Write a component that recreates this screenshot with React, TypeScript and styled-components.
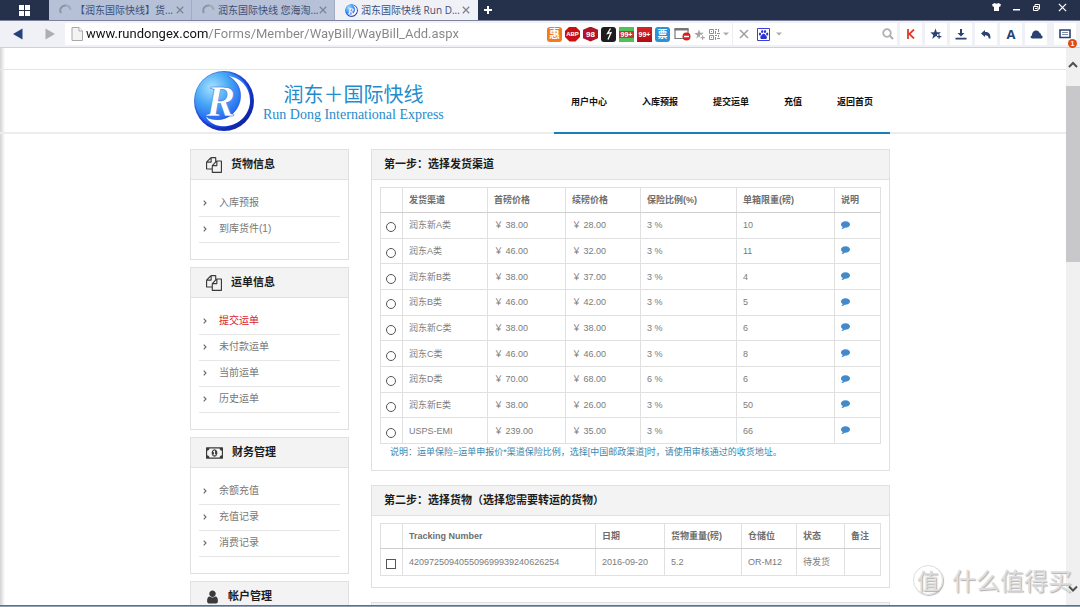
import React, { useState } from "react";
import styled, { createGlobalStyle } from "styled-components";

const latin = `"Liberation Sans", "Noto Sans CJK SC", sans-serif`;
const chrome = `"Open Sans", "Noto Sans CJK SC", sans-serif`;
const cjk = `"Noto Sans CJK SC", sans-serif`;
const line = "#e0e0e0";
const navy = "#2b4270";

const GlobalStyle = createGlobalStyle`
  * { box-sizing: border-box; }
  html, body { margin: 0; }
  body { font-family: ${latin}; background: #fff; }
  button { border: 0; padding: 0; background: none; font: inherit; color: inherit; cursor: pointer; }
  a { color: inherit; text-decoration: none; }
  svg { display: block; flex: none; }
  ul { list-style: none; margin: 0; padding: 0; }
`;

/* ---------- browser frame ---------- */

const Window = styled.div`
  height: 100vh;
  display: grid;
  grid-template-rows: 21px 27px minmax(0, 1fr) 2px;
  overflow: hidden;
`;

const TabBar = styled.div`
  display: flex;
  background: #25304b;
  border-bottom: 1px solid #7c829b;
  font-family: ${chrome};
`;

const StartButton = styled.button`
  width: 49px;
  display: flex;
  align-items: center;
  justify-content: center;
`;

const Tab = styled.div<{ $active?: boolean }>`
  width: 143px;
  display: flex;
  align-items: center;
  gap: 3px;
  padding: 0 7px 0 10px;
  color: #3b4f78;
  font-size: 10px;
  line-height: 20px;
  background: ${(p) => (p.$active ? "#f0f1f7" : "#b6c0d6")};
  border-right: 1px solid ${(p) => (p.$active ? "#f0f1f7" : "#a3abc0")};
`;

const TabTitle = styled.span`
  flex: 1;
  min-width: 0;
  white-space: nowrap;
`;

const NewTab = styled.button`
  width: 20px;
  display: flex;
  align-items: center;
  justify-content: center;
`;

const WindowButtons = styled.div`
  margin-left: auto;
  display: flex;
  align-items: flex-start;
  gap: 11px;
  padding: 2px 13px 0 0;
`;

const WindowButton = styled.button<{ $last?: boolean }>`
  width: 9px;
  height: 10px;
  display: flex;
  align-items: center;
  justify-content: center;
  margin-left: ${(p) => (p.$last ? "6px" : "0")};
`;

const Toolbar = styled.div`
  display: flex;
  align-items: center;
  background: #f0f1f6;
  border-bottom: 1px solid #cfd0d8;
  padding: 0 4px 0 0;
`;

const HistoryButtons = styled.div`
  width: 65px;
  display: flex;
  gap: 22px;
  padding-left: 13px;
`;

const AddressBar = styled.div`
  flex: 1;
  height: 22px;
  display: flex;
  align-items: center;
  background: #fff;
  padding: 0 3px 0 6px;
`;

const AddressInput = styled.input`
  flex: 1;
  min-width: 0;
  height: 22px;
  border: 0;
  outline: 0;
  padding: 0;
  margin-left: 3px;
  font: 13px/22px Roboto, "Noto Sans CJK SC", sans-serif;
  color: transparent;
  background: linear-gradient(to right, #111 122px, #858585 122px);
  background-clip: text;
  -webkit-background-clip: text;
`;

const Extensions = styled.div`
  display: flex;
  align-items: center;
  gap: 3px;
  margin-right: 100px;
`;

const Badge = styled.button<{ $bg: string; $radius?: string; $clip?: string; $size?: string }>`
  width: 15px;
  height: 15px;
  border-radius: ${(p) => p.$radius ?? "3px"};
  clip-path: ${(p) => p.$clip ?? "none"};
  background: ${(p) => p.$bg};
  color: #fff;
  font: bold ${(p) => p.$size ?? "10px"} / 15px ${latin};
  display: flex;
  align-items: center;
  justify-content: center;
`;

const PlainTool = styled.button<{ $w: string }>`
  width: ${(p) => p.$w};
  height: 15px;
  display: flex;
  align-items: center;
  justify-content: center;
`;

const Divider = styled.span`
  width: 1px;
  height: 22px;
  background: #ececf0;
`;

const ToolButtons = styled.div`
  display: flex;
  gap: 3px;
  padding-left: 3px;
`;

const ToolButton = styled.button`
  position: relative;
  width: 22px;
  height: 22px;
  background: #fff;
  color: ${navy};
  display: flex;
  align-items: center;
  justify-content: center;
  font: bold 13px/22px ${chrome};

  &:last-child { margin-left: 4px; }
`;

const Notice = styled.span`
  position: absolute;
  right: -1px;
  bottom: -3px;
  width: 9px;
  height: 9px;
  border-radius: 50%;
  background: #e04a10;
  color: #fff;
  font: bold 7px/9px ${latin};
  text-align: center;
`;

const Viewport = styled.div`
  position: relative;
  overflow: hidden;
  background: linear-gradient(to right, #d3d3d6, #fff 5px);
`;

const ScrollBar = styled.div`
  position: absolute;
  top: 0;
  right: 0;
  bottom: 0;
  width: 14px;
  display: flex;
  flex-direction: column;
  align-items: center;
  background: #f0f0f0;
  padding: 13px 0 12px;
`;

const ScrollThumb = styled.div`
  width: 14px;
  height: 176px;
  margin: 17px 0 auto;
  background: #c8c8cb;
`;

const Taskbar = styled.div`
  background: #8c9fb6;
  border-top: 1px solid #62707f;
`;

const Watermark = styled.div`
  position: absolute;
  right: 8px;
  bottom: 8px;
  display: flex;
  align-items: center;
  gap: 9px;
  font: 24px/34px ${cjk};
  color: #dedede;
  text-shadow: 1px 1px 1px #b0b0b0;
  white-space: nowrap;
`;

const WatermarkSeal = styled.span`
  width: 30px;
  height: 30px;
  border-radius: 50%;
  border: 1px solid #dedede;
  box-shadow: 1px 1px 1px #b8b8b8;
  font-size: 22px;
  line-height: 26px;
  text-align: center;
`;

/* ---------- site ---------- */

const TopStrip = styled.div`
  height: 22px;
  border-bottom: 1px solid #e6e6e6;
`;

const Header = styled.header`
  height: 64px;
  border-bottom: 2px solid #ececec;
`;

const Container = styled.div`
  max-width: 700px;
  margin: 0 auto;
  display: flex;
  align-items: flex-start;
  justify-content: space-between;
`;

const Brand = styled.a`
  display: flex;
  align-items: center;
  height: 62px;
  padding-left: 3px;
  gap: 8px;
`;

const BrandText = styled.span`
  display: flex;
  flex-direction: column;
  align-items: center;
  color: #1f8ccb;
  padding-top: 4px;
`;

const BrandName = styled.span`
  font: 20px/24px ${cjk};
`;

const BrandLatin = styled.span`
  font: 14px/18px "Liberation Serif", serif;
`;

const Nav = styled.nav`
  display: flex;
  gap: 35px;
  height: 64px;
  padding: 0 17px;
  border-bottom: 2px solid #1a7fb5;
  color: #111;
  font: bold 9px/64px ${cjk};
`;

const Columns = styled(Container)`
  padding-top: 15px;
  gap: 22px;
`;

const Sidebar = styled.aside`
  width: 159px;
  flex: none;
  display: flex;
  flex-direction: column;
  gap: 7px;
`;

const Main = styled.main`
  flex: 1;
  min-width: 0;
  display: flex;
  flex-direction: column;
  gap: 14px;
`;

const Panel = styled.section`
  border: 1px solid #e0e0e0;
  background: #fff;
`;

const PanelTitle = styled.h2`
  margin: 0;
  height: 30px;
  display: flex;
  align-items: center;
  gap: 9px;
  background: #f3f3f3;
  border-bottom: 1px solid #e0e0e0;
  color: #1c1c1c;
  font: bold 11px/29px ${latin};

  svg { color: #3a3a3a; }
`;

const MenuTitle = styled(PanelTitle)`
  padding-left: 15px;
`;

const StepTitle = styled(PanelTitle)`
  padding-left: 12px;
`;

const Menu = styled.ul`
  padding: 11px 8px 16px;
`;

const MenuItem = styled.li<{ $active?: boolean }>`
  height: 26px;
  border-bottom: 1px solid #e6e6e6;
  color: ${(p) => (p.$active ? "#d9252b" : "#777")};
  font-size: 10px;
  line-height: 24px;

  a {
    display: flex;
    align-items: center;
    gap: 12px;
    padding-left: 4px;
  }
`;

const StepBody = styled.div<{ $bottom: string }>`
  padding: 7px 8px ${(p) => p.$bottom};
`;

const DataTable = styled.table<{ $height: string }>`
  width: 100%;
  height: ${(p) => p.$height};
  table-layout: fixed;
  border-collapse: collapse;
  color: #7b7b7b;
  font-size: 9px;
  line-height: 14px;

  th, td {
    border: 1px solid ${line};
    height: 25px;
    padding: 0 6px;
    text-align: left;
    white-space: nowrap;
  }
  th {
    border-bottom-color: #cfcfcf;
    color: #6e6e6e;
  }
  th:first-child, td:first-child {
    padding: 0 5px;
  }
`;

const Pick = styled.input`
  appearance: none;
  display: block;
  width: 10px;
  height: 10px;
  margin: 4px 0 0;
  border: 1px solid #555;
  background: #fff;

  &[type="radio"] { border-radius: 50%; }
  &:checked { box-shadow: inset 0 0 0 2px #fff; background: #444; }
`;

const NoteLink = styled.a`
  display: block;
  width: 10px;
  padding-bottom: 2px;
  color: #428bca;
`;

const Note = styled.p`
  margin: 0;
  padding-left: 10px;
  color: #3a87ad;
  font-size: 9px;
  line-height: 16px;
`;

/* ---------- icons ---------- */

type IconProps = { w: number; h?: number; box?: string; d: string };
const Glyph = ({ w, h = w, box = "0 0 1792 1792", d }: IconProps) => (
  <svg width={w} height={h} viewBox={box} fill="currentColor" aria-hidden="true">
    <path d={d} />
  </svg>
);

const FILES =
  "M1696 384q40 0 68 28t28 68v1216q0 40-28 68t-68 28h-960q-40 0-68-28t-28-68v-288h-544q-40 0-68-28t-28-68v-672q0-40 20-88t48-76l408-408q28-28 76-48t88-20h416q40 0 68 28t28 68v328q68-40 128-40h416zm-544 213l-299 299h299v-299zm-640-384l-299 299h299v-299zm196 647l316-316v-416h-384v416q0 40-28 68t-68 28h-416v640h512v-256q0-40 20-88t48-76zm956 804v-1152h-384v416q0 40-28 68t-68 28h-416v640h896z";
const MONEY =
  "M768 1152h384v-96h-128v-448h-114l-148 137 77 80q42-37 55-57h2v288h-128v96zm512-256q0 70-21 142t-59.5 134-101.5 101-138 39-138-39-101.5-101-59.5-134-21-142 21-142 59.5-134 101.5-101 138-39 138 39 101.5 101 59.5 134 21 142zm512 256v-512q-106 0-181-75t-75-181h-1152q0 106-75 181t-181 75v512q106 0 181 75t75 181h1152q0-106 75-181t181-75zm128-832v1152q0 26-19 45t-45 19h-1792q-26 0-45-19t-19-45v-1152q0-26 19-45t45-19h1792q26 0 45 19t19 45z";
const USER =
  "M1536 1399q0 109-62.5 187t-150.5 78h-854q-88 0-150.5-78t-62.5-187q0-85 8.5-160.5t31.5-152 58.5-131 94-89 134.5-34.5q131 128 313 128t313-128q76 0 134.5 34.5t94 89 58.5 131 31.5 152 8.5 160.5zm-256-887q0 159-112.5 271.5t-271.5 112.5-271.5-112.5-112.5-271.5 112.5-271.5 271.5-112.5 271.5 112.5 112.5 271.5z";
const COMMENT =
  "M1792 896q0 174-120 321.5t-326 233-450 85.5q-70 0-145-8-198 175-460 242-49 14-114 22-17 2-30.5-9t-17.5-29v-1q-3-4-.5-12t2-10 4.5-9.5l6-9 7-8.5 8-9q7-8 31-34.5t34.5-38 31-39.5 32.5-51 27-59 26-76q-157-89-247.5-220t-90.5-281q0-130 71-248.5t191-204.5 286-136.5 348-50.5 348 50.5 286 136.5 191 204.5 71 248.5z";

const Cross = ({ size, color, width = 1.6 }: { size: number; color: string; width?: number }) => (
  <svg width={size} height={size} viewBox="0 0 10 10" stroke={color} strokeWidth={width} aria-hidden="true">
    <path d="M1 1l8 8M9 1l-8 8" />
  </svg>
);

const Spinner = () => (
  <svg width="13" height="13" viewBox="0 0 13 13" fill="none" strokeWidth="2" aria-hidden="true">
    <path d="M2 9A5 5 0 0 1 7 1.5" stroke="#8d94a6" />
    <path d="M7 1.5A5 5 0 0 1 11.5 6" stroke="#9fa7ba" />
  </svg>
);

const Arrow = ({ color, flip }: { color: string; flip?: boolean }) => (
  <svg width="10" height="12" viewBox="0 0 10 12" fill={color} aria-hidden="true">
    <path d={flip ? "M.5 .5v11L10 6z" : "M9.5 .5v11L0 6z"} />
  </svg>
);

const Caret = () => (
  <svg width="6" height="4" viewBox="0 0 6 4" fill="#aaa" aria-hidden="true">
    <path d="M0 .5h6L3 3.5z" />
  </svg>
);

const ScrollArrow = ({ down }: { down?: boolean }) => (
  <svg width="10" height="8" viewBox="0 0 10 8" fill="none" stroke="#505050" strokeWidth="2" aria-hidden="true">
    <path d={down ? "M1 1.5l4 4 4-4" : "M1 6l4-4 4 4"} />
  </svg>
);

const Chevron = () => (
  <svg width="4" height="6" viewBox="0 0 4 6" fill="none" stroke="#666" strokeWidth="1.1" aria-hidden="true">
    <path d="M.7 .6L3 3 .7 5.4" />
  </svg>
);

const Logo = ({ size, id }: { size: number; id: string }) => (
  <svg width={size} height={size} viewBox="0 0 62 62" aria-hidden="true">
    <defs>
      <radialGradient id={id} cx="0.3" cy="0.28" r="0.8">
        <stop offset="0" stopColor="#a6e2ff" />
        <stop offset="0.4" stopColor="#46a6f5" />
        <stop offset="0.8" stopColor="#1f5cf0" />
        <stop offset="1" stopColor="#0a22b4" />
      </radialGradient>
      <linearGradient id={`${id}-rim`} x1="0" y1="0" x2="1" y2="1">
        <stop offset="0" stopColor="#5aa8e8" />
        <stop offset="0.5" stopColor="#1c3fd0" />
        <stop offset="1" stopColor="#0a1a90" />
      </linearGradient>
    </defs>
    <circle cx="31" cy="31" r="30" fill={`url(#${id}-rim)`} />
    <circle cx="30" cy="30" r="28" fill={`url(#${id})`} />
    <path d="M35 6C50 8 58 20 57 33C55 48 42 58 27 56C21 55 16 52 13 47C28 54 43 47 47 31C49 20 45 11 35 6z" fill="#fff" />
    <path d="M35 6C46 12 49 22 47 31C43 46 29 53 15 48" fill="none" stroke="#1d50d8" strokeWidth="1" opacity="0.6" />
    <text
      x="13"
      y="46"
      fontFamily="Liberation Serif, serif"
      fontStyle="italic"
      fontWeight="bold"
      fontSize="44"
      fill="#fff"
      stroke="#2a62d8"
      strokeWidth="0.5"
    >
      R
    </text>
  </svg>
);

/* ---------- data ---------- */

const sections = [
  { title: "货物信息", icon: <Glyph w={16} d={FILES} />, items: ["入库预报", "到库货件(1)"] },
  { title: "运单信息", icon: <Glyph w={16} d={FILES} />, items: ["提交运单", "未付款运单", "当前运单", "历史运单"] },
  { title: "财务管理", icon: <Glyph w={17} h={16} box="0 0 1920 1792" d={MONEY} />, items: ["余额充值", "充值记录", "消费记录"] },
  { title: "帐户管理", icon: <Glyph w={13} h={16} box="128 0 1536 1792" d={USER} />, items: [] },
];

const channels = [
  ["润东新A类", "38.00", "28.00", "3 %", "10"],
  ["润东A类", "46.00", "32.00", "3 %", "11"],
  ["润东新B类", "38.00", "37.00", "3 %", "4"],
  ["润东B类", "46.00", "42.00", "3 %", "5"],
  ["润东新C类", "38.00", "38.00", "3 %", "6"],
  ["润东C类", "46.00", "46.00", "3 %", "8"],
  ["润东D类", "70.00", "68.00", "6 %", "6"],
  ["润东新E类", "38.00", "26.00", "3 %", "50"],
  ["USPS-EMI", "239.00", "35.00", "3 %", "66"],
];

const Cols = ({ widths }: { widths: number[] }) => (
  <colgroup>
    {widths.map((w, i) => (
      <col key={i} width={w} />
    ))}
    <col />
  </colgroup>
);

const BrowserTabs = () => (
  <TabBar>
    <StartButton aria-label="菜单">
      <svg width="11" height="11" viewBox="0 0 11 11" fill="#fff">
        <path d="M0 0h5v5H0zM6 0h5v5H6zM0 6h5v5H0zM6 6h5v5H6z" />
      </svg>
    </StartButton>
    <Tab>
      <Spinner />
      <TabTitle>【润东国际快线】货...</TabTitle>
      <button aria-label="关闭标签">
        <Cross size={8} color="#7d8390" />
      </button>
    </Tab>
    <Tab>
      <Spinner />
      <TabTitle>润东国际快线 您海淘...</TabTitle>
      <button aria-label="关闭标签">
        <Cross size={8} color="#7d8390" />
      </button>
    </Tab>
    <Tab $active>
      <Logo size={13} id="favicon" />
      <TabTitle>润东国际快线 Run D...</TabTitle>
      <button aria-label="关闭标签">
        <Cross size={8} color="#7d8390" />
      </button>
    </Tab>
    <NewTab aria-label="新标签">
      <svg width="8" height="8" viewBox="0 0 8 8" fill="#fff">
        <path d="M3 0h2v3h3v2H5v3H3V5H0V3h3z" />
      </svg>
    </NewTab>
    <WindowButtons>
      <WindowButton aria-label="皮肤">
        <svg width="9" height="8" viewBox="0 0 9 8" fill="#fff">
          <path d="M0 1.500L2.500 0Q4.500 1.600 6.500 0L9 1.500 8 4 7 3.500V8H2V3.500L1 4z" />
        </svg>
      </WindowButton>
      <WindowButton aria-label="最小化">
        <svg width="7" height="8" viewBox="0 0 7 8" fill="#fff">
          <path d="M0 6h7v1.500H0z" />
        </svg>
      </WindowButton>
      <WindowButton aria-label="还原">
        <svg width="7" height="7" viewBox="0 0 7 7" fill="none" stroke="#fff">
          <path d="M2 2V.5h4.500v4.500H5M.5 2.500H5v4H.5z" />
          <path d="M2 4.500h2" />
        </svg>
      </WindowButton>
      <WindowButton $last aria-label="关闭">
        <Cross size={9} color="#fff" width={1.4} />
      </WindowButton>
    </WindowButtons>
  </TabBar>
);

const BrowserToolbar = () => {
  const [url, setUrl] = useState("www.rundongex.com/Forms/Member/WayBill/WayBill_Add.aspx");
  return (
    <Toolbar>
      <HistoryButtons>
        <button aria-label="后退">
          <Arrow color="#26427a" />
        </button>
        <button aria-label="前进">
          <Arrow color="#acaeb4" flip />
        </button>
      </HistoryButtons>
      <AddressBar>
        <svg width="12" height="14" viewBox="0 0 12 14" fill="#f3f3f3" stroke="#a9a9a9">
          <path d="M1 .5h7L11.500 4v9.500H1z" />
          <path d="M8 .5V4h3.500" fill="#fff" />
        </svg>
        <AddressInput aria-label="地址" value={url} onChange={(e) => setUrl(e.target.value)} />
        <Extensions>
          <Badge $bg="#f47a20" $size="11px">惠</Badge>
          <Badge
            $bg="#c90f12"
            $size="6px"
            $clip="polygon(30% 0, 70% 0, 100% 30%, 100% 70%, 70% 100%, 30% 100%, 0 70%, 0 30%)"
          >
            ABP
          </Badge>
          <Badge $bg="#b3122a" $clip="polygon(50% 0, 100% 22%, 100% 78%, 50% 100%, 0 78%, 0 22%)" $size="8px">
            98
          </Badge>
          <Badge $bg="#1d1d1f" aria-label="加速">
            <svg width="8" height="12" viewBox="0 0 8 12" fill="none" stroke="#fff" strokeWidth="1.3">
              <path d="M5.500 .5L2.500 5.500l3.500-.8L3 11.500" />
            </svg>
          </Badge>
          <Badge $bg="linear-gradient(#4fc35a 4px, #c9342e 4px 11px, #4fc35a 11px)" $radius="0" $size="7px">
            99+
          </Badge>
          <Badge $bg="linear-gradient(#d8252a, #b00d12)" $radius="0" $size="7px">
            99+
          </Badge>
          <Badge $bg="#2a94d6" $size="10px">票</Badge>
          <PlainTool $w="18px" aria-label="拦截">
            <svg width="17" height="14" viewBox="0 0 17 14">
              <path d="M1 2.500h13v9H1z" fill="#fff" stroke="#777" strokeWidth="1.2" />
              <path d="M.4 1h14.200v2.500H.4z" fill="#777" />
              <circle cx="12.500" cy="9.500" r="4" fill="#e01b1b" />
              <path d="M10 9.500h5" stroke="#fff" strokeWidth="1.5" />
            </svg>
          </PlainTool>
          <PlainTool $w="11px" aria-label="收藏">
            <svg width="11" height="11" viewBox="0 0 11 11" fill="#a6a6a6">
              <path d="M5 .5l1.300 3.200 3.400.1-2 2H6v2.400L4.800 7.600 2.300 9.800l.9-3.400L.3 4.200l3.500-.4zM8 6.500h1.200V8h1.600v1.200H9.200v1.500H8V9.200H6.600V8H8z" />
            </svg>
          </PlainTool>
          <PlainTool $w="12px" aria-label="二维码">
            <svg width="11" height="11" viewBox="0 0 11 11" fill="none" stroke="#8f8f8f">
              <path d="M.5 .5h4v4h-4zM.5 6.500h4v4h-4z" />
              <path d="M2 2.500h1M2 8.500h1M6 .5h2M9.500 0v3M6.500 2v3M8 4.500h3M6 6.500h2M9.500 6v2M6.500 8v3M8 9.500h3" />
            </svg>
          </PlainTool>
          <PlainTool $w="6px" aria-label="更多">
            <Caret />
          </PlainTool>
          <Divider />
          <PlainTool $w="15px" aria-label="停止">
            <Cross size={10} color="#a0a0a0" />
          </PlainTool>
          <PlainTool $w="19px" aria-label="百度">
            <svg width="13" height="13" viewBox="0 0 13 13">
              <path d="M.5 .5h12v12H.5z" fill="#fff" stroke="#3a3fd8" />
              <g fill="#2a2fd8">
                <ellipse cx="3" cy="6" rx="1.100" ry="1.500" />
                <ellipse cx="5.200" cy="3.600" rx="1.100" ry="1.500" />
                <ellipse cx="8" cy="3.600" rx="1.100" ry="1.500" />
                <ellipse cx="10.200" cy="6" rx="1.100" ry="1.500" />
                <path d="M6.600 5.800c1.300 0 1.700 1.500 2.700 2.300 1.200 1 .7 3-1 2.900-1.200-.1-2.200-.1-3.400 0-1.700.1-2.200-1.900-1-2.900 1-.8 1.400-2.300 2.700-2.300z" />
              </g>
            </svg>
          </PlainTool>
          <Caret />
        </Extensions>
        <PlainTool $w="12px" aria-label="搜索">
          <svg width="12" height="12" viewBox="0 0 12 12" fill="none" stroke="#b0b0b0" strokeWidth="1.8">
            <circle cx="5" cy="5" r="3.800" />
            <path d="M7.800 7.800L11 11" strokeWidth="2.200" />
          </svg>
        </PlainTool>
      </AddressBar>
      <ToolButtons>
        <ToolButton aria-label="K">
          <svg width="8" height="10" viewBox="0 0 8 10" fill="none" stroke="#e23a2c" strokeWidth="1.8">
            <path d="M1 0v10M7 .5L2.300 5 7 9.500" />
          </svg>
        </ToolButton>
        <ToolButton aria-label="收藏夹">
          <svg width="12" height="12" viewBox="0 0 12 12" fill="currentColor">
            <path d="M5.500 .5l1.300 3.700h4l-2 2H7v2H5.600L2.300 11l1-3.900L.3 4.400l3.800-.2zM8.500 6.500h1.200V8h1.600v1.200H9.700v1.500H8.500V9.200H7V8h1.500z" />
          </svg>
        </ToolButton>
        <ToolButton aria-label="下载">
          <svg width="12" height="11" viewBox="0 0 12 11" fill="currentColor">
            <path d="M5 0h2v4h2.500L6 7.500 2.500 4H5zM.5 8.700h11v1.800H.5z" />
          </svg>
        </ToolButton>
        <ToolButton aria-label="撤销">
          <svg width="10" height="9" viewBox="0 0 10 9" fill="currentColor">
            <path d="M4 0v2c4 0 5.500 1.500 5.500 6.500H7.700C7.700 6 6.500 5.300 4 5.300V7L0 3.500z" />
          </svg>
        </ToolButton>
        <ToolButton aria-label="字体">A</ToolButton>
        <ToolButton aria-label="云">
          <svg width="13" height="9" viewBox="0 0 13 9" fill="currentColor">
            <path d="M2.300 8.500C.3 8.500 0 6 2 5.500 2 2 4 .5 6.200.5c1.800 0 3 .9 3.400 2.500 1 .2 1.500.9 1.400 2.200 2.200.3 2.200 3.300 0 3.300z" />
          </svg>
        </ToolButton>
        <ToolButton aria-label="消息">
          <svg width="12" height="10" viewBox="0 0 12 10" fill="none" stroke="currentColor">
            <path d="M1 1h10v7.500H1z" strokeWidth="1.600" />
            <path d="M3 3.500h6M3 5.500h6" opacity="0.6" />
          </svg>
          <Notice>1</Notice>
        </ToolButton>
      </ToolButtons>
    </Toolbar>
  );
};

export default function App() {
  const [channel, setChannel] = useState("");
  const [picked, setPicked] = useState(false);

  return (
    <Window>
      <GlobalStyle />
      <BrowserTabs />
      <BrowserToolbar />
      <Viewport>
        <TopStrip />
        <Header>
          <Container>
            <Brand href="#">
              <Logo size={62} id="brand" />
              <BrandText>
                <BrandName>润东＋国际快线</BrandName>
                <BrandLatin>Run Dong International Express</BrandLatin>
              </BrandText>
            </Brand>
            <Nav>
              {["用户中心", "入库预报", "提交运单", "充值", "返回首页"].map((t) => (
                <a href="#" key={t}>
                  {t}
                </a>
              ))}
            </Nav>
          </Container>
        </Header>

        <Columns>
          <Sidebar>
            {sections.map((s) => (
              <Panel key={s.title}>
                <MenuTitle>
                  {s.icon}
                  {s.title}
                </MenuTitle>
                <Menu>
                  {s.items.map((item) => (
                    <MenuItem key={item} $active={item === "提交运单"}>
                      <a href="#">
                        <Chevron />
                        {item}
                      </a>
                    </MenuItem>
                  ))}
                </Menu>
              </Panel>
            ))}
          </Sidebar>

          <Main>
            <Panel>
              <StepTitle>第一步：选择发货渠道</StepTitle>
              <StepBody $bottom="10px">
                <DataTable $height="257px">
                  <Cols widths={[22, 85, 78, 75, 96, 98]} />
                  <thead>
                    <tr>
                      <th aria-label="选择" />
                      <th>发货渠道</th>
                      <th>首磅价格</th>
                      <th>续磅价格</th>
                      <th>保险比例(%)</th>
                      <th>单箱限重(磅)</th>
                      <th>说明</th>
                    </tr>
                  </thead>
                  <tbody>
                    {channels.map(([name, first, next, rate, limit]) => (
                      <tr key={name}>
                        <td>
                          <Pick
                            type="radio"
                            name="channel"
                            aria-label={name}
                            checked={channel === name}
                            onChange={() => setChannel(name)}
                          />
                        </td>
                        <td>{name}</td>
                        <td>￥ {first}</td>
                        <td>￥ {next}</td>
                        <td>{rate}</td>
                        <td>{limit}</td>
                        <td>
                          <NoteLink href="#" aria-label={`${name} 说明`}>
                            <Glyph w={9} d={COMMENT} />
                          </NoteLink>
                        </td>
                      </tr>
                    ))}
                  </tbody>
                </DataTable>
                <Note>说明：运单保险=运单申报价*渠道保险比例，选择[中国邮政渠道]时，请使用审核通过的收货地址。</Note>
              </StepBody>
            </Panel>

            <Panel>
              <StepTitle>第二步：选择货物（选择您需要转运的货物）</StepTitle>
              <StepBody $bottom="11px">
                <DataTable $height="53px">
                  <Cols widths={[22, 193, 69, 77, 55, 48]} />
                  <thead>
                    <tr>
                      <th aria-label="选择" />
                      <th>Tracking Number</th>
                      <th>日期</th>
                      <th>货物重量(磅)</th>
                      <th>仓储位</th>
                      <th>状态</th>
                      <th>备注</th>
                    </tr>
                  </thead>
                  <tbody>
                    <tr>
                      <td>
                        <Pick
                          type="checkbox"
                          aria-label="420972509405509699939240626254"
                          checked={picked}
                          onChange={() => setPicked(!picked)}
                        />
                      </td>
                      <td>420972509405509699939240626254</td>
                      <td>2016-09-20</td>
                      <td>5.2</td>
                      <td>OR-M12</td>
                      <td>待发货</td>
                      <td />
                    </tr>
                  </tbody>
                </DataTable>
              </StepBody>
            </Panel>

            <Panel>
              <StepTitle />
            </Panel>
          </Main>
        </Columns>

        <ScrollBar>
          <ScrollArrow />
          <ScrollThumb />
          <ScrollArrow down />
        </ScrollBar>
        <Watermark>
          <WatermarkSeal>值</WatermarkSeal>
          什么值得买
        </Watermark>
      </Viewport>
      <Taskbar />
    </Window>
  );
}
